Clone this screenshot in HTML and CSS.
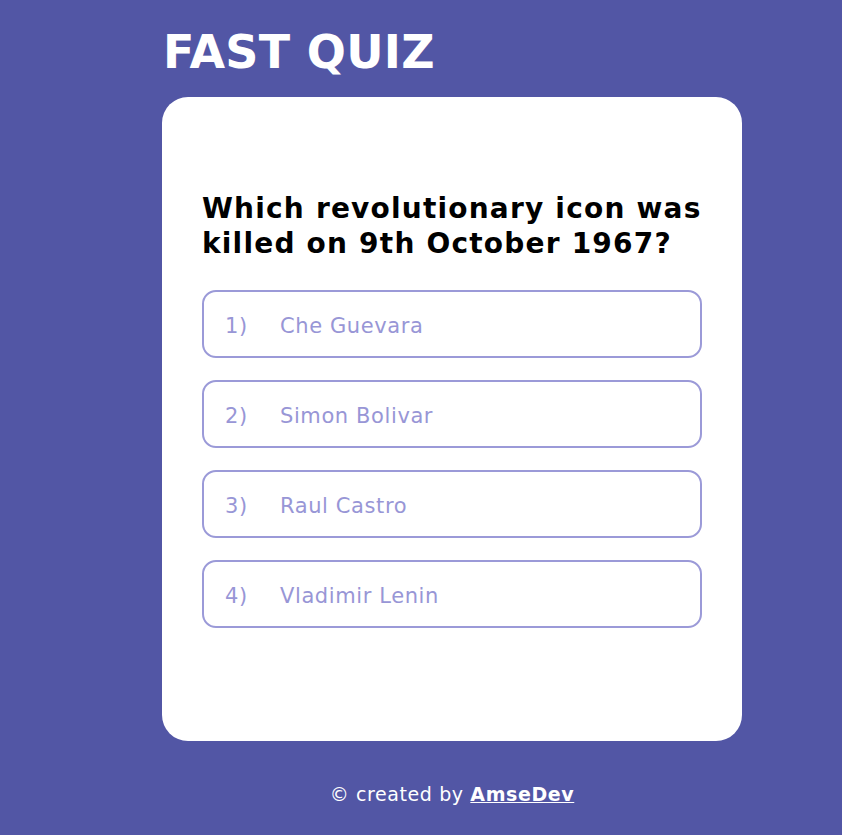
FILE: index.html
```html
<!DOCTYPE html>
<html>
<head>
<meta charset="utf-8">
<link rel="stylesheet" href="styles.css">
</head>
<body>
<div class="wrap">
  <h1 class="title">FAST QUIZ</h1>
  <div class="card">
    <h2 class="question">Which revolutionary icon was killed on 9th October 1967?</h2>
    <div class="options">
      <div class="option"><span class="num">1)</span><span class="label">Che Guevara</span></div>
      <div class="option"><span class="num">2)</span><span class="label">Simon Bolivar</span></div>
      <div class="option"><span class="num">3)</span><span class="label">Raul Castro</span></div>
      <div class="option"><span class="num">4)</span><span class="label">Vladimir Lenin</span></div>
    </div>
  </div>
  <p class="footer">© created by <a class="author" href="#">AmseDev</a></p>
</div>
</body>
</html>
```
FILE: styles.css
```css
html, body {
  margin: 0;
  padding: 0;
}
body {
  background: #5256a5;
  font-family: "DejaVu Sans", Verdana, sans-serif;
  min-height: 835px;
}
.wrap {
  width: 580px;
  margin-left: 162px;
  padding-top: 24px;
}
.title {
  margin: 0 0 17px 1px;
  font-size: 46px;
  line-height: 56px;
  font-weight: bold;
  letter-spacing: 0.3px;
  color: #ffffff;
}
.card {
  background: #ffffff;
  border-radius: 26px;
  padding: 94px 40px 113px 40px;
}
.question {
  margin: 0 0 29px 0;
  font-size: 28px;
  line-height: 35px;
  font-weight: bold;
  letter-spacing: 1.2px;
  color: #000000;
}
.options {
  display: flex;
  flex-direction: column;
  gap: 22px;
}
.option {
  box-sizing: border-box;
  height: 68px;
  border: 2px solid #9b9ad8;
  border-radius: 14px;
  display: flex;
  align-items: center;
  padding: 4px 0 0 21px;
  color: #9896d6;
  font-size: 21px;
  letter-spacing: 0.6px;
}
.num {
  width: 55px;
}
.footer {
  margin: 42px 0 0 0;
  text-align: center;
  color: #ffffff;
  font-size: 19px;
  letter-spacing: 0.6px;
}
.author {
  color: #ffffff;
  font-weight: bold;
  text-decoration: underline;
}
```
